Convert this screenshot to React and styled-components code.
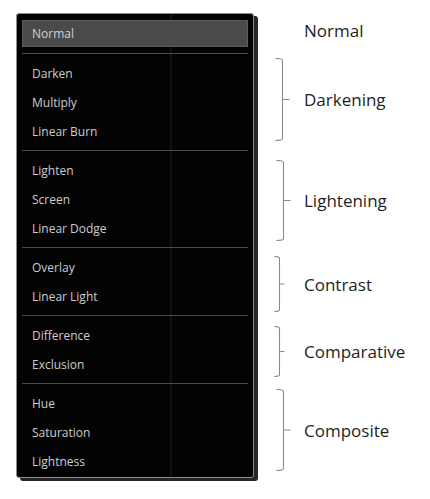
import React from "react";
import styled, { createGlobalStyle } from "styled-components";

const Global = createGlobalStyle`
  html, body { margin: 0; padding: 0; background: #fff; }
  body { font-family: "Open Sans", "Liberation Sans", sans-serif; }
`;

const Page = styled.div`
  display: flex;
  align-items: flex-start;
  padding: 13px 0 0 16px;
  gap: 16px;
  width: 430px;
  height: 499px;
  box-sizing: border-box;
`;

const Panel = styled.div`
  width: 238px;
  box-sizing: border-box;
  border: 1px solid #8c8c8c;
  border-radius: 3px;
  background-color: #030303;
  background-image: linear-gradient(
    to right,
    transparent 153px,
    #111 153px,
    #111 155px,
    transparent 155px
  );
  box-shadow: 4px 3px 0 #262626;
  padding: 6px 5px 0 5px;
  display: flex;
  flex-direction: column;
`;

const Selected = styled.div`
  height: 27px;
  box-sizing: border-box;
  background: #4a4a4a;
  border: 1px solid #5c5c5c;
  display: flex;
  align-items: center;
  padding-left: 9px;
  color: #d0d0d0;
  font-size: 12px;
  margin-bottom: 6px;
`;

const Separator = styled.div`
  height: 1px;
  background: #4a4a4a;
`;

const Group = styled.div`
  display: flex;
  flex-direction: column;
  padding: 4.5px 0 ${(p) => (p.$last ? "1.5px" : "4.5px")};
`;

const Item = styled.div`
  height: 29px;
  display: flex;
  align-items: center;
  padding-left: 10px;
  color: #cdcdcd;
  font-size: 12px;
`;

const Annotations = styled.div`
  display: flex;
  flex-direction: column;
`;

const Annotation = styled.div`
  display: flex;
  align-items: center;
  height: ${(p) => p.$h}px;
  margin-top: ${(p) => p.$top}px;
`;

const BracketBox = styled.div`
  width: 22px;
  height: 100%;
  flex: none;
`;

const Label = styled.span`
  margin-left: 12px;
  font-family: "Open Sans", "Liberation Sans", sans-serif;
  font-size: 17px;
  color: #1e1e1e;
  line-height: 1;
`;

function Bracket({ h, x, hook, tick }) {
  if (!h) return <BracketBox />;
  const mid = h / 2;
  return (
    <BracketBox>
      <svg width="22" height={h} viewBox={`0 0 22 ${h}`}>
        <path
          d={`M ${x - hook} 0.5 Q ${x} 0.5 ${x} 2.5 V ${h - 2.5} Q ${x} ${h - 0.5} ${x - hook} ${h - 0.5} M ${x} ${mid} H ${x + tick}`}
          fill="none"
          stroke="#8a8a8a"
          strokeWidth="1.1"
        />
      </svg>
    </BracketBox>
  );
}

const groups = [
  ["Darken", "Multiply", "Linear Burn"],
  ["Lighten", "Screen", "Linear Dodge"],
  ["Overlay", "Linear Light"],
  ["Difference", "Exclusion"],
  ["Hue", "Saturation", "Lightness"],
];

const notes = [
  { label: "Normal", top: 7, h: 20 },
  { label: "Darkening", top: 18, h: 83, x: 12.5, hook: 7, tick: 7 },
  { label: "Lightening", top: 19, h: 81, x: 13.5, hook: 7, tick: 7 },
  { label: "Contrast", top: 15, h: 56, x: 9.5, hook: 5, tick: 5 },
  { label: "Comparative", top: 14, h: 51, x: 9.5, hook: 5, tick: 5 },
  { label: "Composite", top: 12, h: 82, x: 13.5, hook: 7, tick: 7 },
];

export default function App() {
  return (
    <>
      <Global />
      <Page>
        <Panel>
          <Selected>Normal</Selected>
          {groups.map((g, i) => (
            <React.Fragment key={i}>
              <Separator />
              <Group $last={i === groups.length - 1}>
                {g.map((name) => (
                  <Item key={name}>{name}</Item>
                ))}
              </Group>
            </React.Fragment>
          ))}
        </Panel>
        <Annotations>
          {notes.map((n) => (
            <Annotation key={n.label} $top={n.top} $h={n.h}>
              <Bracket h={n.x ? n.h : 0} x={n.x} hook={n.hook} tick={n.tick} />
              <Label>{n.label}</Label>
            </Annotation>
          ))}
        </Annotations>
      </Page>
    </>
  );
}
